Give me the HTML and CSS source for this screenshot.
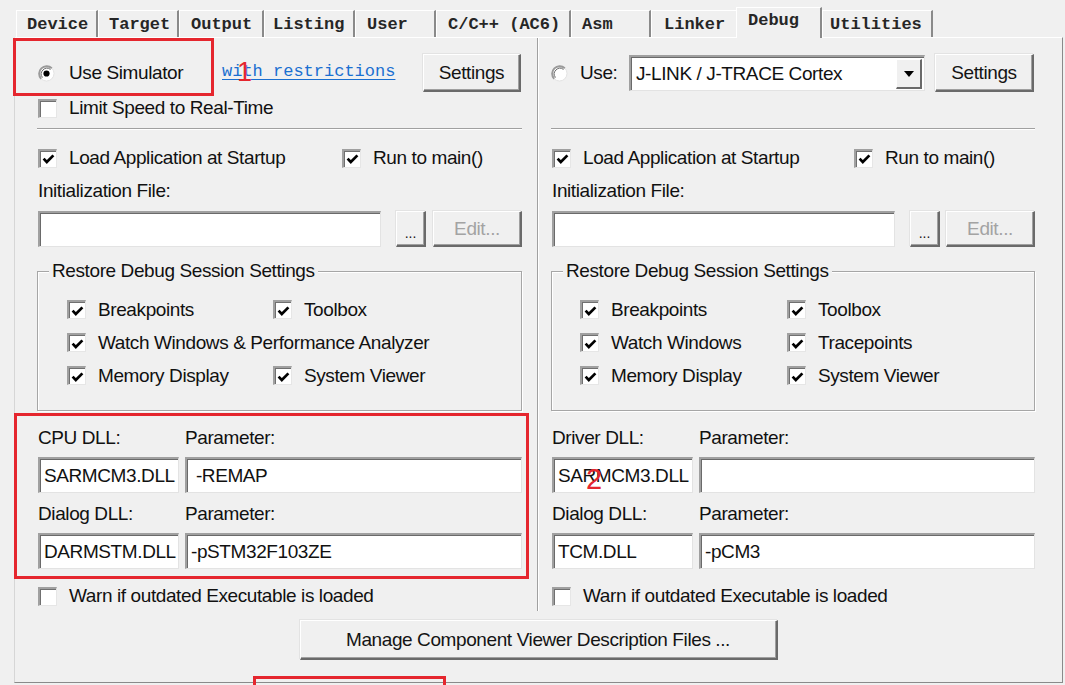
FILE: index.html
```html
<!DOCTYPE html>
<html>
<head>
<meta charset="utf-8">
<link rel="stylesheet" href="styles.css">
</head>
<body>
<div class="screen">
  <div class="tabs">
    <div class="tab t-device">Device</div>
    <div class="tab t-target">Target</div>
    <div class="tab t-output">Output</div>
    <div class="tab t-listing">Listing</div>
    <div class="tab t-user">User</div>
    <div class="tab t-cpp">C/C++ (AC6)</div>
    <div class="tab t-asm">Asm</div>
    <div class="tab t-linker">Linker</div>
    <div class="tab t-debug active">Debug</div>
    <div class="tab t-util">Utilities</div>
  </div>

  <div class="panel">
    <div class="cols">
      <!-- LEFT COLUMN -->
      <div class="col col-left">
        <div class="row row-top">
          <span class="radio-item sim">
            <svg class="radio" width="17" height="17" viewBox="0 0 17 17"><circle cx="8.5" cy="8.5" r="7.5" fill="#fff" stroke="#e3e3e3" stroke-width="1"/><path d="M3.2 13.8 A7.5 7.5 0 0 1 13.8 3.2" stroke="#9a9a9a" stroke-width="2" fill="none"/><path d="M4.5 12.5 A5.7 5.7 0 0 1 12.5 4.5" stroke="#6a6a6a" stroke-width="1" fill="none"/><circle cx="8.5" cy="8.5" r="3.1" fill="#000"/></svg>
            Use Simulator
          </span>
          <span class="link">with restrictions</span>
          <button class="btn btn-settings">Settings</button>
        </div>
        <div class="row row-limit">
          <span class="cb"></span>Limit Speed to Real-Time
        </div>
        <div class="sep"></div>
        <div class="row row-check">
          <span class="cbi load"><span class="cb"><svg width="13" height="12" viewBox="0 0 13 12"><path d="M1.6 5.6 L4.8 9 L11.4 2.4" stroke="#000" stroke-width="2.7" fill="none"/></svg></span>Load Application at Startup</span>
          <span class="cbi"><span class="cb"><svg width="13" height="12" viewBox="0 0 13 12"><path d="M1.6 5.6 L4.8 9 L11.4 2.4" stroke="#000" stroke-width="2.7" fill="none"/></svg></span>Run to main()</span>
        </div>
        <div class="row row-label">Initialization File:</div>
        <div class="row row-input">
          <div class="field init"></div>
          <button class="btn dots">...</button>
          <button class="btn edit">Edit...</button>
        </div>
        <fieldset class="group">
          <legend>Restore Debug Session Settings</legend>
          <div class="ggrid">
            <span class="cbi"><span class="cb"><svg width="13" height="12" viewBox="0 0 13 12"><path d="M1.6 5.6 L4.8 9 L11.4 2.4" stroke="#000" stroke-width="2.7" fill="none"/></svg></span>Breakpoints</span>
            <span class="cbi"><span class="cb"><svg width="13" height="12" viewBox="0 0 13 12"><path d="M1.6 5.6 L4.8 9 L11.4 2.4" stroke="#000" stroke-width="2.7" fill="none"/></svg></span>Toolbox</span>
            <span class="cbi span2"><span class="cb"><svg width="13" height="12" viewBox="0 0 13 12"><path d="M1.6 5.6 L4.8 9 L11.4 2.4" stroke="#000" stroke-width="2.7" fill="none"/></svg></span>Watch Windows &amp; Performance Analyzer</span>
            <span class="cbi"><span class="cb"><svg width="13" height="12" viewBox="0 0 13 12"><path d="M1.6 5.6 L4.8 9 L11.4 2.4" stroke="#000" stroke-width="2.7" fill="none"/></svg></span>Memory Display</span>
            <span class="cbi"><span class="cb"><svg width="13" height="12" viewBox="0 0 13 12"><path d="M1.6 5.6 L4.8 9 L11.4 2.4" stroke="#000" stroke-width="2.7" fill="none"/></svg></span>System Viewer</span>
          </div>
        </fieldset>
        <div class="dll">
          <div class="dll-label first">CPU DLL:</div>
          <div class="dll-label first">Parameter:</div>
          <div class="field">SARMCM3.DLL</div>
          <div class="field">&nbsp;-REMAP</div>
          <div class="dll-label">Dialog DLL:</div>
          <div class="dll-label">Parameter:</div>
          <div class="field">DARMSTM.DLL</div>
          <div class="field">-pSTM32F103ZE</div>
        </div>
        <div class="row row-warn">
          <span class="cb"></span>Warn if outdated Executable is loaded
        </div>
      </div>

      <!-- RIGHT COLUMN -->
      <div class="col col-right">
        <div class="row row-top">
          <span class="radio-item use">
            <svg class="radio" width="17" height="17" viewBox="0 0 17 17"><circle cx="8.5" cy="8.5" r="7.5" fill="#fff" stroke="#e3e3e3" stroke-width="1"/><path d="M3.2 13.8 A7.5 7.5 0 0 1 13.8 3.2" stroke="#9a9a9a" stroke-width="2" fill="none"/><path d="M4.5 12.5 A5.7 5.7 0 0 1 12.5 4.5" stroke="#6a6a6a" stroke-width="1" fill="none"/></svg>
            Use:
          </span>
          <div class="field combo">
            <span class="combo-text">J-LINK / J-TRACE Cortex</span>
            <span class="combo-btn"><svg width="10" height="6" viewBox="0 0 10 6"><path d="M0 0 H10 L5 6 Z" fill="#000"/></svg></span>
          </div>
          <button class="btn btn-settings">Settings</button>
        </div>
        <div class="row row-limit"></div>
        <div class="sep"></div>
        <div class="row row-check">
          <span class="cbi load r"><span class="cb"><svg width="13" height="12" viewBox="0 0 13 12"><path d="M1.6 5.6 L4.8 9 L11.4 2.4" stroke="#000" stroke-width="2.7" fill="none"/></svg></span>Load Application at Startup</span>
          <span class="cbi"><span class="cb"><svg width="13" height="12" viewBox="0 0 13 12"><path d="M1.6 5.6 L4.8 9 L11.4 2.4" stroke="#000" stroke-width="2.7" fill="none"/></svg></span>Run to main()</span>
        </div>
        <div class="row row-label">Initialization File:</div>
        <div class="row row-input">
          <div class="field init"></div>
          <button class="btn dots">...</button>
          <button class="btn edit">Edit...</button>
        </div>
        <fieldset class="group">
          <legend>Restore Debug Session Settings</legend>
          <div class="ggrid">
            <span class="cbi"><span class="cb"><svg width="13" height="12" viewBox="0 0 13 12"><path d="M1.6 5.6 L4.8 9 L11.4 2.4" stroke="#000" stroke-width="2.7" fill="none"/></svg></span>Breakpoints</span>
            <span class="cbi"><span class="cb"><svg width="13" height="12" viewBox="0 0 13 12"><path d="M1.6 5.6 L4.8 9 L11.4 2.4" stroke="#000" stroke-width="2.7" fill="none"/></svg></span>Toolbox</span>
            <span class="cbi"><span class="cb"><svg width="13" height="12" viewBox="0 0 13 12"><path d="M1.6 5.6 L4.8 9 L11.4 2.4" stroke="#000" stroke-width="2.7" fill="none"/></svg></span>Watch Windows</span>
            <span class="cbi"><span class="cb"><svg width="13" height="12" viewBox="0 0 13 12"><path d="M1.6 5.6 L4.8 9 L11.4 2.4" stroke="#000" stroke-width="2.7" fill="none"/></svg></span>Tracepoints</span>
            <span class="cbi"><span class="cb"><svg width="13" height="12" viewBox="0 0 13 12"><path d="M1.6 5.6 L4.8 9 L11.4 2.4" stroke="#000" stroke-width="2.7" fill="none"/></svg></span>Memory Display</span>
            <span class="cbi"><span class="cb"><svg width="13" height="12" viewBox="0 0 13 12"><path d="M1.6 5.6 L4.8 9 L11.4 2.4" stroke="#000" stroke-width="2.7" fill="none"/></svg></span>System Viewer</span>
          </div>
        </fieldset>
        <div class="dll">
          <div class="dll-label first">Driver DLL:</div>
          <div class="dll-label first">Parameter:</div>
          <div class="field">SARMCM3.DLL</div>
          <div class="field"></div>
          <div class="dll-label">Dialog DLL:</div>
          <div class="dll-label">Parameter:</div>
          <div class="field">TCM.DLL</div>
          <div class="field">-pCM3</div>
        </div>
        <div class="row row-warn">
          <span class="cb"></span>Warn if outdated Executable is loaded
        </div>
      </div>
    </div>
    <div class="bottom">
      <button class="btn manage">Manage Component Viewer Description Files ...</button>
    </div>
  </div>

  <div class="mark mark1"></div>
  <div class="mark mark2"></div>
  <div class="mark mark3"></div>
  <div class="num num1">1</div>
  <div class="num num2">2</div>
</div>
</body>
</html>
```

FILE: styles.css
```css
* { box-sizing: border-box; }
html, body { margin: 0; padding: 0; }
body {
  background: #f0f0f0;
  width: 1065px;
  height: 685px;
  overflow: hidden;
  font-family: "Liberation Sans", Arial, sans-serif;
  font-size: 19px;
  letter-spacing: -0.4px;
  color: #111;
}
.screen {
  position: relative;
  width: 1065px;
  height: 685px;
  padding-left: 14px;
}

/* ---------- tabs ---------- */
.tabs {
  display: flex;
  align-items: flex-end;
  height: 37px;
  padding-left: 2px;
  position: relative;
  z-index: 2;
}
.tab {
  height: 27px;
  font-family: "Liberation Mono", "Courier New", monospace;
  font-weight: bold;
  font-size: 17px;
  letter-spacing: 0;
  color: #262626;
  line-height: 27px;
  padding-left: 10px;
  border-top: 1px solid #fff;
  border-left: 1px solid #fff;
  border-right: 2px solid #8a8a8a;
  white-space: nowrap;
}
.tab.active {
  height: 31px;
  margin-bottom: -1px;
  line-height: 26px;
  background: #f0f0f0;
}
.t-device { width: 82px; }
.t-target { width: 81px; }
.t-output { width: 85px; padding-left: 11px; }
.t-listing { width: 91px; padding-left: 8px; }
.t-user { width: 81px; padding-left: 11px; }
.t-cpp { width: 135px; padding-left: 11px; }
.t-asm { width: 80px; }
.t-linker { width: 85px; padding-left: 12px; border-right: none; }
.t-debug { width: 86px; padding-left: 11px; }
.t-util { width: 111px; padding-left: 7px; }

/* ---------- panel ---------- */
.panel {
  width: 1049px;
  height: 646px;
  border-top: 1px solid #fff;
  border-left: 1px solid #d6d6d6;
  border-right: 1px solid #8a8a8a;
  border-bottom: 1px solid #8a8a8a;
  display: flex;
  flex-direction: column;
}
.cols {
  display: grid;
  grid-template-columns: 523px 1fr;
  height: 572px;
}
.col {
  display: flex;
  flex-direction: column;
}
.col-left {
  padding: 0 15px 0 23px;
  border-right: 1px solid #a0a0a0;
}
.col-right {
  padding: 0 27px 0 13px;
  border-left: 1px solid #fff;
}

.row {
  display: flex;
  align-items: center;
  white-space: nowrap;
}
.row-top { margin-top: 16px; height: 38px; }
.row-limit { height: 32px; }
.sep {
  margin: 4px 0 0 -1px;
  height: 2px;
  border-top: 1px solid #a0a0a0;
  border-bottom: 1px solid #fff;
}
.row-check { margin-top: 11px; height: 34px; }
.row-label { height: 32px; }
.row-input { margin-top: 4px; height: 36px; }
.row-warn { margin-top: 12px; height: 30px; }

/* radio */
.radio-item {
  display: flex;
  align-items: center;
  flex: none;
}
.radio { flex: none; margin-right: 14px; }
.radio-item.sim { width: 184px; }
.radio-item.use { width: 78px; margin-left: -1px; }
.radio-item.use .radio { margin-right: 12px; }

.link {
  font-family: "Liberation Mono", "Courier New", monospace;
  font-size: 17px;
  letter-spacing: 0;
  color: #1a6fd0;
  text-decoration: underline;
  text-underline-offset: 3px;
  margin-top: -4px;
}

/* checkbox */
.cb {
  width: 19px;
  height: 19px;
  flex: none;
  background: #fff;
  border-top: 2px solid #a0a0a0;
  border-left: 2px solid #a0a0a0;
  border-right: 1px solid #e6e6e6;
  border-bottom: 1px solid #e6e6e6;
  box-shadow: inset 1px 1px 0 #707070;
  margin-right: 12px;
  display: flex;
  align-items: center;
  justify-content: center;
}
.cb svg { margin: 1px 0 0 1px; }
.cbi {
  display: flex;
  align-items: center;
  white-space: nowrap;
}
.cbi.load { width: 304px; flex: none; }
.cbi.load.r { width: 302px; }

/* buttons */
.btn {
  font-family: inherit;
  font-size: 19px;
  letter-spacing: -0.4px;
  color: #141414;
  background: #f0f0f0;
  border-top: 1px solid #fff;
  border-left: 1px solid #fff;
  border-right: 2px solid #6a6a6a;
  border-bottom: 2px solid #6a6a6a;
  box-shadow: inset -1px -1px 0 #a0a0a0, -1px -1px 0 #e3e3e3;
  padding: 0;
  flex: none;
  white-space: nowrap;
}
.btn-settings {
  width: 98px;
  height: 38px;
  margin-left: auto;
}
.col-left .btn-settings { margin-right: 1px; }
.dots {
  width: 30px;
  height: 36px;
  margin-left: 15px;
  font-size: 14px;
  padding-top: 8px;
  letter-spacing: 0;
}
.edit {
  width: 89px;
  height: 36px;
  margin-left: auto;
  color: #a3a3a3;
}

/* fields */
.field {
  background: #fff;
  height: 36px;
  border-top: 2px solid #a0a0a0;
  border-left: 2px solid #a0a0a0;
  border-right: 1px solid #e3e3e3;
  border-bottom: 1px solid #e3e3e3;
  box-shadow: inset 1px 1px 0 #6a6a6a;
  display: flex;
  align-items: center;
  padding-left: 4px;
  white-space: pre;
  overflow: hidden;
}
.init { width: 343px; }
.combo {
  width: 296px;
  height: 36px;
  flex: none;
  padding-left: 5px;
  padding-right: 2px;
}
.combo-text { flex: 1; }
.combo-btn {
  width: 26px;
  height: 30px;
  margin-top: 1px;
  background: #f0f0f0;
  border-top: 1px solid #fff;
  border-left: 1px solid #fff;
  border-right: 2px solid #6a6a6a;
  border-bottom: 2px solid #6a6a6a;
  display: flex;
  align-items: center;
  justify-content: center;
}
.combo + .btn-settings { margin-left: 10px; width: 99px; }

/* group */
.group {
  margin: 14px 0 0 -1px;
  padding: 12px 0 18px 0;
  border: 1px solid #a6a6a6;
  box-shadow: inset 1px 1px 0 #fff, 1px 1px 0 #fff;
  min-width: 0;
  width: 485px;
}
.col-right .group { width: 484px; }
.group legend {
  margin-left: 11px;
  padding: 0 3px;
  height: 20px;
  line-height: 20px;
  background: #f0f0f0;
}
.ggrid {
  display: grid;
  grid-template-columns: 206px auto;
  grid-auto-rows: 33px;
  padding-left: 29px;
}
.col-right .ggrid { padding-left: 28px; grid-template-columns: 207px auto; }
.ggrid .cbi { height: 33px; }
.span2 { grid-column: 1 / 3; }

/* dll */
.dll {
  display: grid;
  grid-template-columns: 141px 1fr;
  column-gap: 6px;
  grid-template-rows: 34px 40px 36px 36px;
  margin-top: 12px;
}
.dll-label {
  display: flex;
  align-items: center;
  height: 30px;
  align-self: start;
}
.dll-label:not(.first) { margin-top: 2px; }
.dll .field { height: 36px; align-self: start; }

/* bottom button */
.bottom {
  display: flex;
  justify-content: center;
  margin-top: 10px;
}
.manage {
  width: 478px;
  height: 40px;
}

/* red annotations */
.mark {
  position: absolute;
  border: 3px solid #e5262e;
  z-index: 5;
}
.mark1 { left: 13px; top: 38px; width: 201px; height: 58px; }
.mark2 { left: 14px; top: 413px; width: 515px; height: 166px; }
.mark3 { left: 253px; top: 676px; width: 193px; height: 30px; }
.num {
  position: absolute;
  color: #e5262e;
  font-family: "Liberation Sans", Arial, sans-serif;
  letter-spacing: 0;
  z-index: 5;
  line-height: 1;
}
.num1 { left: 237px; top: 59px; font-size: 27px; }
.num2 { left: 586px; top: 465px; font-size: 29px; }
```
